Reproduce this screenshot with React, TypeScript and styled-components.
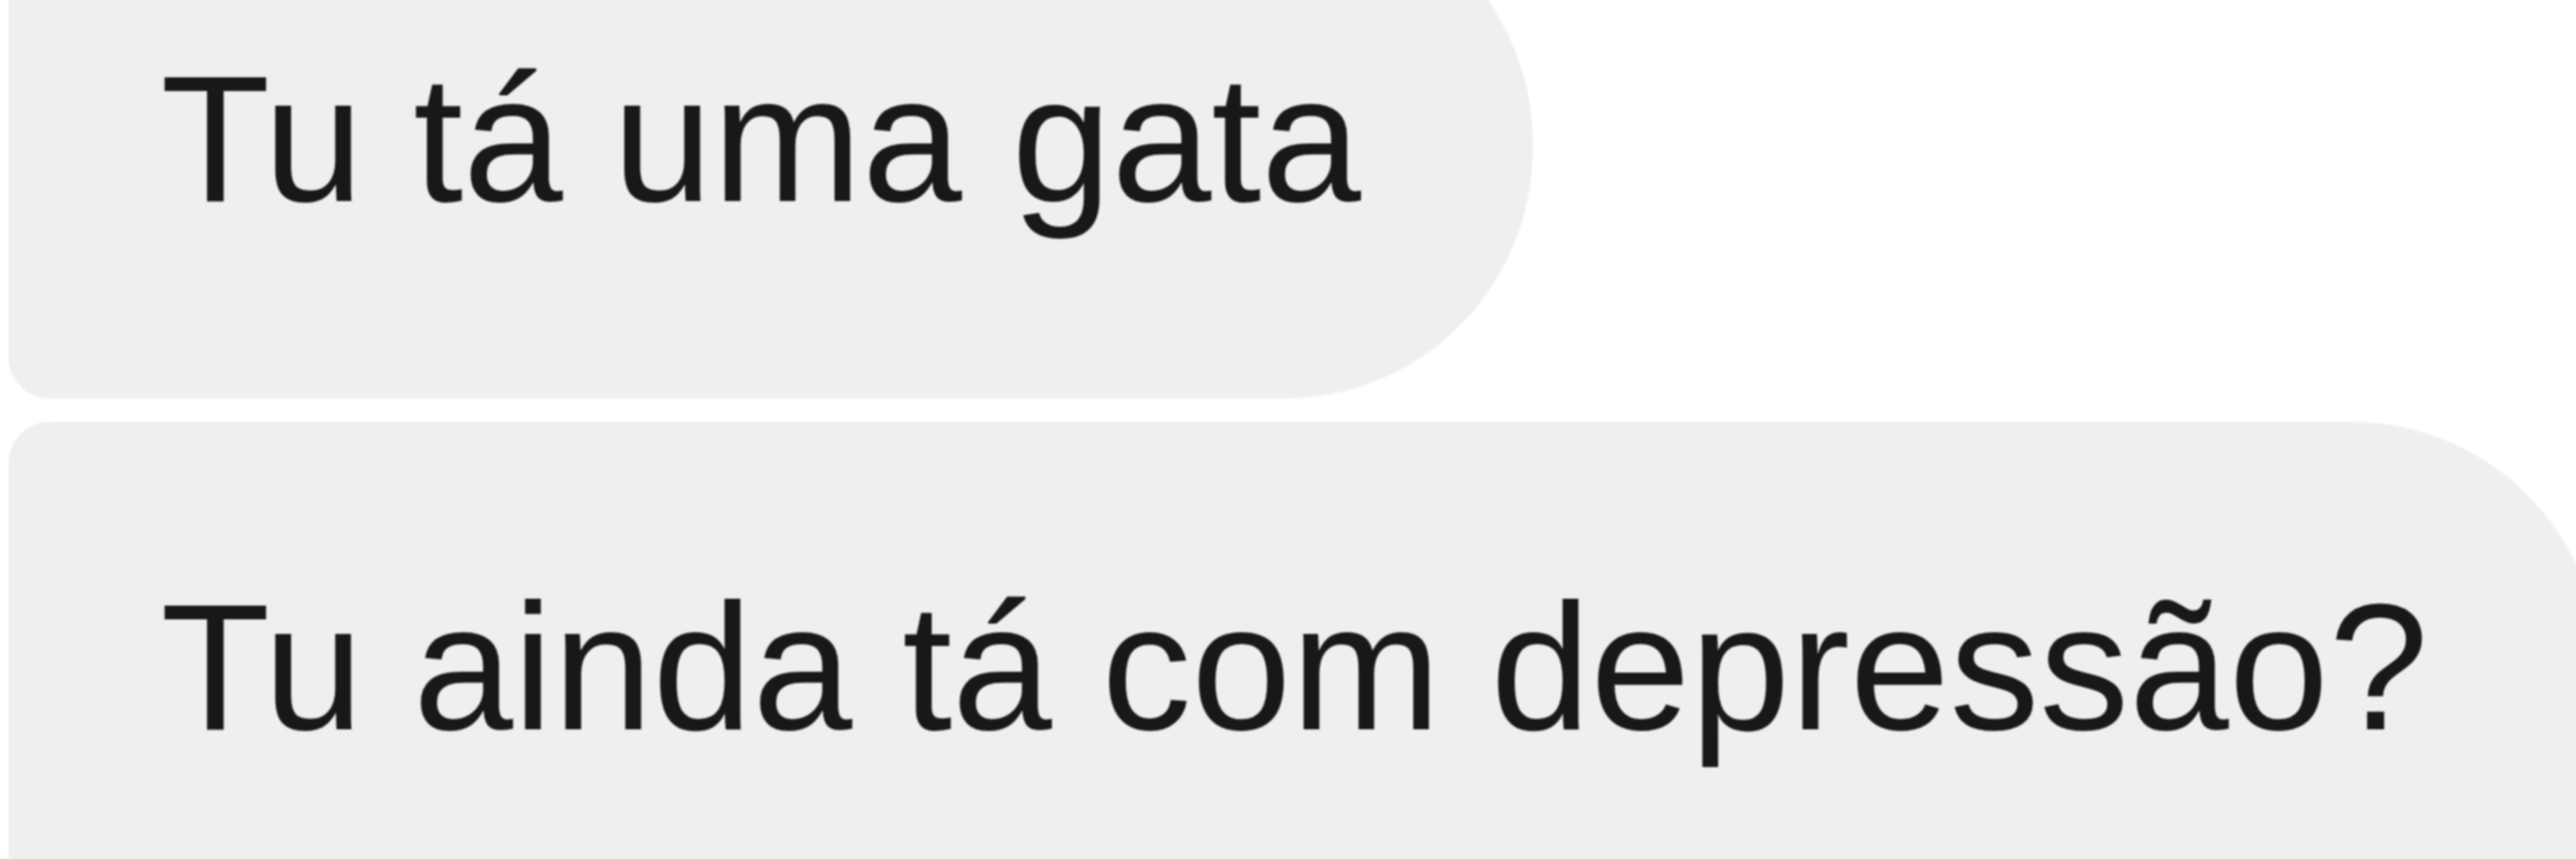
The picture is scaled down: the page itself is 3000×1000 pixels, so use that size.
import * as React from "react"
import styled, { createGlobalStyle, css } from "styled-components"

const GlobalStyle = createGlobalStyle`
  html, body {
    margin: 0;
    padding: 0;
    background: #ffffff;
    overflow: hidden;
  }
  body {
    font-family: "Liberation Sans", Arial, sans-serif;
  }
`

type Position = "first" | "last"

const messages: { id: number; text: string; position: Position }[] = [
  { id: 1, text: "Tu tá uma gata", position: "first" },
  { id: 2, text: "Tu ainda tá com depressão?", position: "last" },
]

const Screen = styled.main`
  width: 3000px;
  height: 1000px;
  overflow: hidden;
  background: #ffffff;
`

const Thread = styled.section`
  display: flex;
  flex-direction: column;
  align-items: flex-start;
  gap: 27px;
  margin-top: -124px;
  padding-left: 10px;
  filter: blur(1.2px);
`

const Bubble = styled.div<{ $position: Position }>`
  flex: none;
  padding: 181px 200px 181px 177px;
  background: #efefef;
  white-space: nowrap;
  border-radius: 48px 290px 290px 48px;
  ${({ $position }) =>
    $position === "first"
      ? css`
          padding-bottom: 198px;
        `
      : css`
          padding-bottom: 300px;
        `}
`

const Text = styled.p`
  margin: 0;
  font-family: "Liberation Sans", Arial, sans-serif;
  font-size: 209px;
  line-height: 209px;
  font-weight: 400;
  color: #181818;
`

export default function App() {
  return (
    <Screen>
      <GlobalStyle />
      <Thread>
        {messages.map((m) => (
          <Bubble key={m.id} $position={m.position}>
            <Text>{m.text}</Text>
          </Bubble>
        ))}
      </Thread>
    </Screen>
  )
}
